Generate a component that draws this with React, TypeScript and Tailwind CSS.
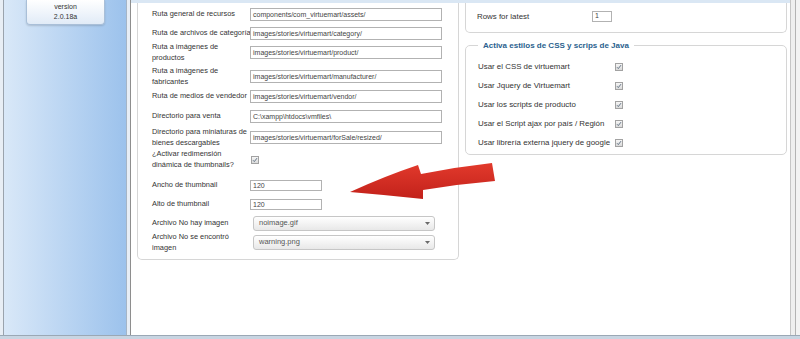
import React from "react";

type Row = {
  label: React.ReactNode;
  kind: "text" | "small" | "check" | "select";
  value?: string;
  mt: string;
  h: string;
};

const leftRows: Row[] = [
  { label: "Ruta general de recursos", kind: "text", value: "components/com_virtuemart/assets/", mt: "mt-0", h: "h-[15px]" },
  { label: "Ruta de archivos de categoría", kind: "text", value: "images/stories/virtuemart/category/", mt: "mt-[4px]", h: "h-[15px]" },
  { label: <>Ruta a imágenes de<br />productos</>, kind: "text", value: "images/stories/virtuemart/product/", mt: "mt-[1px]", h: "h-[21px]" },
  { label: <>Ruta a imágenes de<br />fabricantes</>, kind: "text", value: "images/stories/virtuemart/manufacturer/", mt: "mt-[3px]", h: "h-[21px]" },
  { label: "Ruta de medios de vendedor", kind: "text", value: "images/stories/virtuemart/vendor/", mt: "mt-[2px]", h: "h-[15px]" },
  { label: "Directorio para venta", kind: "text", value: "C:\\xampp\\htdocs\\vmfiles\\", mt: "mt-[5px]", h: "h-[15px]" },
  { label: <>Directorio para miniaturas de<br />bienes descargables</>, kind: "text", value: "images/stories/virtuemart/forSale/resized/", mt: "mt-[3px]", h: "h-[21px]" },
  { label: <>¿Activar redimensión<br />dinámica de thumbnails?</>, kind: "check", mt: "mt-[1px]", h: "h-[21px]" },
  { label: "Ancho de thumbnail", kind: "small", value: "120", mt: "mt-[8px]", h: "h-[15px]" },
  { label: "Alto de thumbnail", kind: "small", value: "120", mt: "mt-[4px]", h: "h-[15px]" },
  { label: "Archivo No hay imagen", kind: "select", value: "noimage.gif", mt: "mt-[4px]", h: "h-[15px]" },
  { label: <>Archivo No se encontró<br />imagen</>, kind: "select", value: "warning.png", mt: "mt-[1px]", h: "h-[21px]" },
];

const scriptRows = [
  "Usar el CSS de virtuemart",
  "Usar Jquery de Virtuemart",
  "Usar los scripts de producto",
  "Usar el Script ajax por país / Región",
  "Usar librería externa jquery de google",
];

function Check({ className = "" }: { className?: string }) {
  return (
    <span
      className={`flex h-[8px] w-[8px] shrink-0 items-center justify-center border border-[#a2a2a2] bg-linear-to-b from-[#f6f6f6] to-[#dadada] ${className}`}
    >
      <svg viewBox="0 0 8 8" className="h-[6px] w-[6px]">
        <path d="M1.3 4.3 L3.1 6.1 L6.7 1.5" fill="none" stroke="#56687a" strokeWidth="1.2" />
      </svg>
    </span>
  );
}

function Field({ value, size }: { value?: string; size: string }) {
  return (
    <div
      className={`${size} flex items-center overflow-hidden whitespace-nowrap border border-[#b2b2b2] bg-white pl-[2px] text-[7px] leading-[10px] text-[#444]`}
    >
      {value}
    </div>
  );
}

function Control({ row }: { row: Row }) {
  if (row.kind === "check") return <Check className="ml-[1px]" />;
  if (row.kind === "select")
    return (
      <div className="ml-[3px] flex h-[15px] w-[182px] items-center justify-between rounded-[3px] border border-[#c6c6c6] bg-linear-to-b from-white to-[#e8e8e8] pl-[5px] pr-[4px] text-[7.5px] text-[#555]">
        <span>{row.value}</span>
        <svg width="5" height="3" viewBox="0 0 5 3">
          <path d="M0 0 L5 0 L2.5 3 Z" fill="#6a6a6a" />
        </svg>
      </div>
    );
  return <Field value={row.value} size={row.kind === "small" ? "h-[11px] w-[72px]" : "h-[13px] w-[192px]"} />;
}

export default function App() {
  return (
    <div className="relative flex h-[339px] w-[800px] flex-col overflow-hidden bg-white font-['Liberation_Sans',Arial,sans-serif] text-[#333]">
      <div className="flex h-[335px]">
        <div className="w-[3px] bg-[#e8eef5]" />
        <div className="w-px bg-[#9aa3ad]" />
        <aside className="w-[122px] bg-linear-to-r from-[#d9e8f8] to-[#9cc2ec]">
          <div className="ml-[22px] flex h-[25px] w-[79px] flex-col items-center justify-center rounded-b-[4px] border border-t-0 border-[#a9bfd8] bg-linear-to-b from-white to-[#e1ebf7] text-[7px] leading-[10px] text-[#333] shadow-[0_1px_2px_rgba(0,0,0,0.15)]">
            <span>version</span>
            <span>2.0.18a</span>
          </div>
        </aside>
        <div className="w-px bg-[#a5b5c6]" />
        <div className="w-[3px] bg-[#e7eef6]" />
        <div className="w-px bg-[#8e8e8e]" />

        <main className="flex w-[659px] flex-col">
          <div className="h-[3px] bg-[#dae7f4]" />
          <div className="flex items-start gap-[6px] pl-[6px]">
            <section className="w-[322px] rounded-b-[5px] border border-t-0 border-[#d6d6d6] pb-[6px] pl-[14px] pt-[4px] text-[7.4px] leading-[10.5px]">
              {leftRows.map((row, i) => (
                <div key={i} className={`flex items-center ${row.mt} ${row.h}`}>
                  <div className="w-[98px] shrink-0 whitespace-nowrap">{row.label}</div>
                  <Control row={row} />
                </div>
              ))}
            </section>

            <div className="flex w-[322px] flex-col text-[7.9px] leading-[11px]">
              <section className="h-[30px] rounded-b-[5px] border border-t-0 border-[#d6d6d6] pl-[11px] pt-[6px]">
                <div className="flex h-[14px] items-center">
                  <div className="w-[115px] shrink-0">Rows for latest</div>
                  <Field value="1" size="h-[11px] w-[20px]" />
                </div>
              </section>

              <fieldset className="mt-[7px] rounded-[5px] border border-[#d6d6d6] pb-[2px] pl-[12px] pt-[6px]">
                <legend className="px-[5px] text-[8px] font-bold leading-[11px] text-[#2a5f8e]">
                  Activa estilos de CSS y scrips de Java
                </legend>
                {scriptRows.map((label) => (
                  <div key={label} className="flex h-[19px] items-center">
                    <div className="min-w-[135px] whitespace-nowrap">{label}</div>
                    <Check className="ml-[2px]" />
                  </div>
                ))}
              </fieldset>
            </div>
          </div>
        </main>

        <div className="w-px bg-[#c6c6c6]" />
        <div className="w-[4px] bg-[#efefef]" />
        <div className="w-px bg-[#b3b3b3]" />
        <div className="w-[4px] bg-[#f3f3f3]" />
      </div>
      <div className="h-px bg-[#9ba8b5]" />
      <div className="h-[3px] bg-[#c8d5e2]" />

      <svg className="pointer-events-none absolute left-0 top-0" width="800" height="339" viewBox="0 0 800 339">
        <defs>
          <linearGradient id="arrowFill" x1="0" y1="0" x2="0" y2="1">
            <stop offset="0" stopColor="#e23a2c" />
            <stop offset="1" stopColor="#c2211a" />
          </linearGradient>
        </defs>
        <path
          d="M350 192 Q385 176 418 165 L421 174 Q456 167 492 163 L495 181 Q459 184 423 190 L423 199 Q386 195 350 192 Z"
          fill="url(#arrowFill)"
        />
      </svg>
    </div>
  );
}
